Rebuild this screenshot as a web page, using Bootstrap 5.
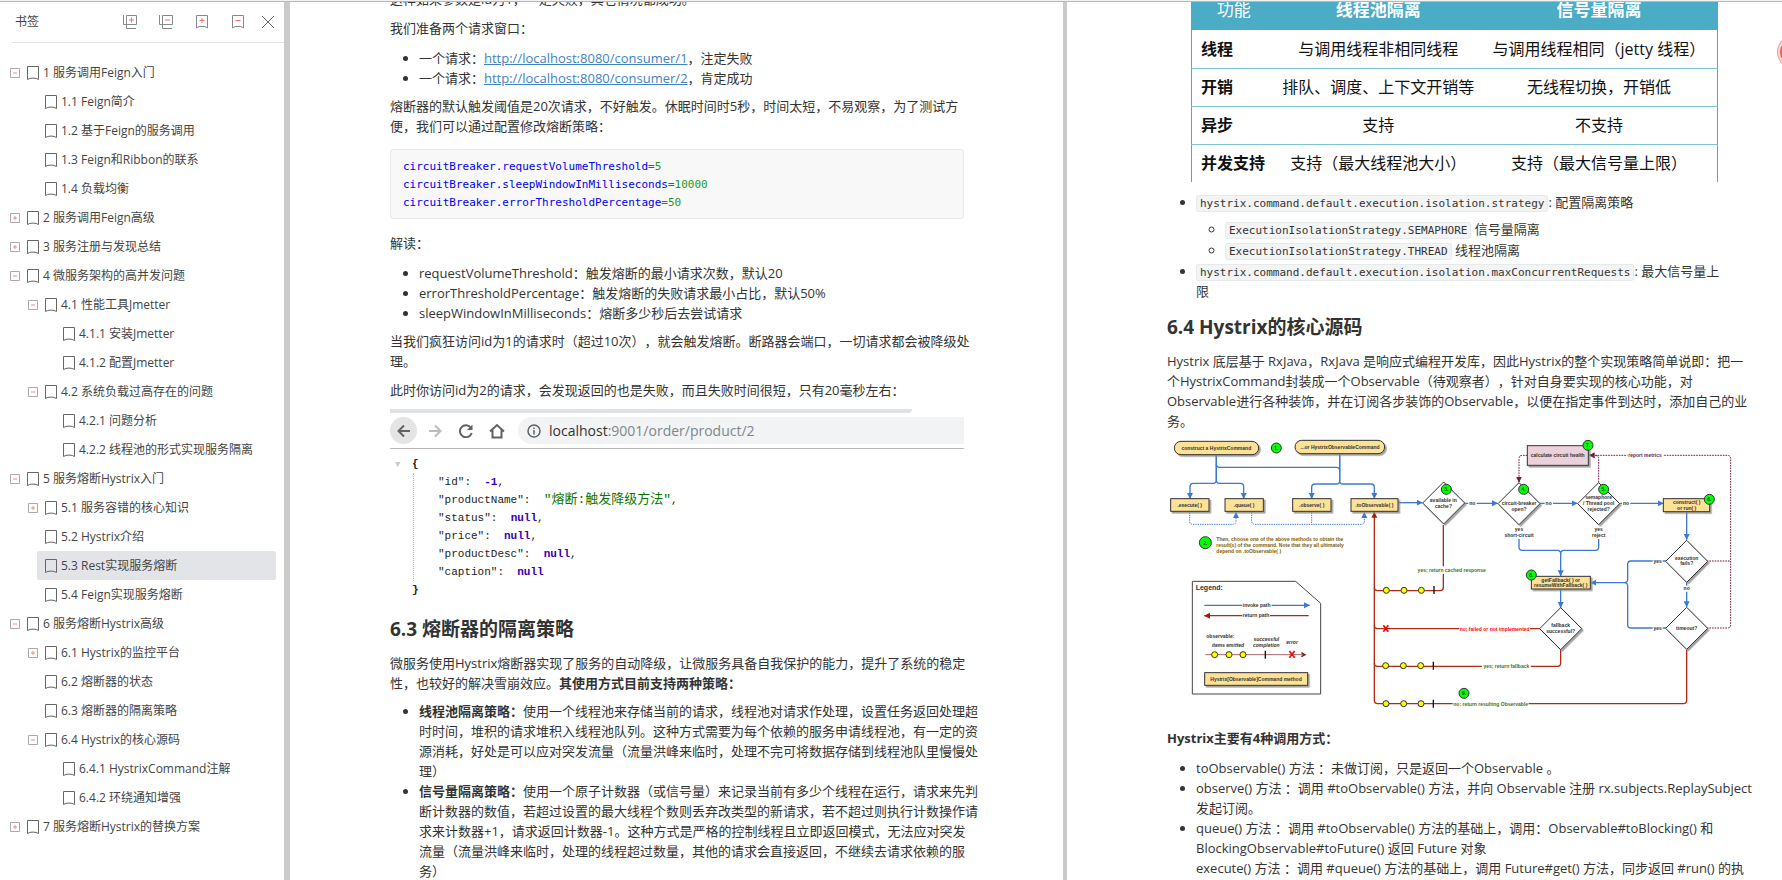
<!DOCTYPE html>
<html lang="zh-CN">
<head>
<meta charset="utf-8">
<meta name="viewport" content="width=device-width, initial-scale=1">
<title>服务熔断Hystrix</title>
<link href="https://cdn.jsdelivr.net/npm/bootstrap@5.3.0/dist/css/bootstrap.min.css" rel="stylesheet">
<style>
  body { font-family: "Open Sans", "Noto Sans CJK SC", sans-serif; font-size: 13px; line-height: 20px; color: #333; background: #fff; text-spacing-trim: space-all; }
  .viewer { border-top: 1px solid #f2f2f2; }
  .viewer-inner { border-top: 1px solid #b8b8b8; }

  /* bookmark panel */
  .outline-panel { width: 284px; font-size: 12px; color: #444; }
  .outline-head { height: 41px; margin-left: 12px; padding: 0 9px 0 3px; border-bottom: 1px solid #e4e4e4; }
  .outline-tools { gap: 22px; }
  .tool-btn { width: 14px; height: 14px; line-height: 0; }
  .outline-list { padding: 15px 8px 0 10px; }
  .outline-list li { display: flex; align-items: center; height: 29px; }
  .level-2 { padding-left: 18px; }
  .level-3 { padding-left: 36px; }
  .fold { width: 10px; height: 10px; margin-right: -1px; flex: none; line-height: 0; }
  .outline-link { height: 29px; padding-left: 8px; gap: 4px; border-radius: 2px; color: #444; text-decoration: none; white-space: nowrap; }
  .outline-link.active { background: #e3e4e8; }
  .outline-link svg { flex: none; }
  .gutter { width: 6px; background: #cacaca; }
  .gutter-thin { width: 4px; background: #cacaca; }

  /* document sheets */
  .sheet { min-width: 0; }
  .sheet-a { flex: 1 1 773px; padding: 0 84px 0 100px; }
  .sheet-b { flex: 1 1 715px; padding: 0 26px 0 100px; }
  .sheet p { margin: 0 0 9px; }
  .sheet ul { margin: 10px 0 8px; padding-left: 29px; }
  .sheet ul ul { margin: 7px 0 0; line-height: 21px; }
  .sheet h2 { margin: 12px 0 10px; font-size: 19px; line-height: 28px; font-weight: 700; color: #333; }
  .sheet a { color: #4183c4; }
  .scrolled-text { margin-top: -13px !important; }
  .scrolled-table { margin-top: -12px; }
  .inset { margin-right: 15px; }
  .sheet pre { margin: 13px 15px 14px 0; padding: 8px 12px 6px; border: 1px solid #e7eaed; border-radius: 3px; background: #f8f8f8; font: 11px/18px "DejaVu Sans Mono", monospace; color: #555; overflow: hidden; }
  .key { color: #0000f0; }
  .num { color: #1a9a1a; }
  .sheet li code { padding: 1px 3px; border: 1px solid #e7eaed; border-radius: 3px; background: #f3f4f4; font: 11px "DejaVu Sans Mono", monospace; color: #333; }

  /* browser capture */
  .tab-strip { width: 91%; height: 4px; background: #dee1e6; border-bottom-right-radius: 6px; }
  .nav-strip { height: 36px; border-bottom: 1px solid #b8b8b8; color: #5f6368; }
  .nav-ico { width: 27px; height: 27px; display: grid; place-items: center; border-radius: 50%; }
  .nav-ico.pressed { background: #e4e4e4; }
  .address { height: 27px; margin-left: 4px; padding-left: 9px; gap: 8px; background: #f1f3f4; border-radius: 14px 0 0 14px; font-size: 14px; color: #80868b; }
  .address b { font-weight: 400; color: #333; }
  .json-tree { padding: 6px 0 0 5px; font: 11px/18px "Liberation Mono", "Noto Sans CJK SC", monospace; color: #222; white-space: pre; }
  .json-tree > div, .json-body > div { height: 18px; }
  .json-tree > .json-body { height: auto; margin-left: 18px; padding-left: 24px; border-left: 1px dotted #bbb; }
  .json-body b { color: #3800b8; }
  .json-str { color: #0b7500; font-size: 13px; }
  .json-fold { display: inline-block; width: 17px; color: #ccc; font-size: 9px; }

  /* comparison table */
  .compare { width: 527px; max-width: 100%; margin-left: 24px; border: solid #4bacc6; border-width: 0 1px; table-layout: fixed; font-size: 16px; line-height: 24px; color: #111; text-align: center; }
  .compare thead { background: #4bacc6; color: #fff; font-size: 17px; }
  .compare thead th { height: 40px; }
  .compare th, .compare td { height: 38px; padding: 0; white-space: nowrap; }
  .compare tbody tr > :first-child { text-align: left; padding-left: 9px; }
  .compare thead th:first-child { font-weight: 400; }
  .compare tbody tr + tr { border-top: 1px solid #7cc3d6; }
  .flow { display: block; width: calc(100% - 15px); margin-bottom: 13px; }
  .flow text { font: 700 15px "Liberation Sans", sans-serif; text-anchor: middle; fill: #333; }
  .flow .legend-title { font-size: 21px; }
  .flow .slanted text { font-style: italic; }
  .flow .ok text { fill: #38761d; }
  .flow .note text { fill: #7f6000; text-anchor: start; }
  .flow .metric { fill: #741b47; }
  .flow .failed { fill: #f00; }
  .float-ball { position: absolute; top: 34px; right: -29px; width: 34px; height: 34px; border-radius: 50%; background: #e9605a; border: 3px solid #fbd5d2; outline: 1px solid #f0a09b; outline-offset: -1px; }
</style>
</head>
<body>
<svg width="0" height="0" class="position-absolute" aria-hidden="true">
  <symbol id="mark" viewBox="0 0 12 14"><path d="M.5 .5h11v13C9 11.600 3 11.600 .5 13.500z" fill="none" stroke="#666"/></symbol>
  <symbol id="minus" viewBox="0 0 10 10"><path d="M.5 .5h9v9h-9z" fill="none" stroke="#aaa"/><path d="M3 5h4" stroke="#f08a8a"/></symbol>
  <symbol id="plus" viewBox="0 0 10 10"><path d="M.5 .5h9v9h-9z" fill="none" stroke="#aaa"/><path d="M3 5h4M5 3v4" stroke="#f08a8a"/></symbol>
</svg>

<div class="viewer vh-100 overflow-hidden position-relative">
<div class="viewer-inner d-flex h-100">

<aside class="outline-panel flex-shrink-0">
  <div class="outline-head d-flex align-items-center">
    <span class="me-auto">书签</span>
    <div class="outline-tools d-flex">
      <button class="tool-btn btn p-0 border-0" aria-label="展开全部"><svg width="14" height="14" fill="none" stroke="#888"><path d="M.5 0v9.500h3M3.500 .5h10v9h-10zM3.500 9.500v4h9.500"/><path d="M6 5h5M8.500 2.500v5" stroke="#f07070"/></svg></button>
      <button class="tool-btn btn p-0 border-0" aria-label="折叠全部"><svg width="14" height="14" fill="none" stroke="#888"><path d="M.5 0v9.500h3M3.500 .5h10v9h-10zM3.500 9.500v4h9.500"/><path d="M6 5h5" stroke="#f07070"/></svg></button>
      <button class="tool-btn btn p-0 border-0" aria-label="添加书签"><svg width="14" height="14" fill="none" stroke="#888"><path d="M1.500 .5h11v12.500L10 11.500H4l-2.500 1.500z"/><path d="M4.500 5.500h5M7 3v5" stroke="#f07070"/></svg></button>
      <button class="tool-btn btn p-0 border-0" aria-label="删除书签"><svg width="14" height="14" fill="none" stroke="#888"><path d="M1.500 .5h11v12.500L10 11.500H4l-2.500 1.500z"/><path d="M4.500 5.500h5" stroke="#f07070"/></svg></button>
    </div>
    <button class="tool-btn btn p-0 border-0 ms-3" aria-label="关闭"><svg width="14" height="14" stroke="#666"><path d="M1 1l12 12M13 1L1 13"/></svg></button>
  </div>
  <ul class="outline-list list-unstyled mb-0">
    <li><button class="fold btn p-0 border-0" aria-label="折叠"><svg width="10" height="10"><use href="#minus"/></svg></button><a href="#" class="outline-link d-flex align-items-center flex-fill"><svg width="12" height="14"><use href="#mark"/></svg>1 服务调用Feign入门</a></li>
    <li class="level-2"><span class="fold"></span><a href="#" class="outline-link d-flex align-items-center flex-fill"><svg width="12" height="14"><use href="#mark"/></svg>1.1 Feign简介</a></li>
    <li class="level-2"><span class="fold"></span><a href="#" class="outline-link d-flex align-items-center flex-fill"><svg width="12" height="14"><use href="#mark"/></svg>1.2 基于Feign的服务调用</a></li>
    <li class="level-2"><span class="fold"></span><a href="#" class="outline-link d-flex align-items-center flex-fill"><svg width="12" height="14"><use href="#mark"/></svg>1.3 Feign和Ribbon的联系</a></li>
    <li class="level-2"><span class="fold"></span><a href="#" class="outline-link d-flex align-items-center flex-fill"><svg width="12" height="14"><use href="#mark"/></svg>1.4 负载均衡</a></li>
    <li><button class="fold btn p-0 border-0" aria-label="展开"><svg width="10" height="10"><use href="#plus"/></svg></button><a href="#" class="outline-link d-flex align-items-center flex-fill"><svg width="12" height="14"><use href="#mark"/></svg>2 服务调用Feign高级</a></li>
    <li><button class="fold btn p-0 border-0" aria-label="展开"><svg width="10" height="10"><use href="#plus"/></svg></button><a href="#" class="outline-link d-flex align-items-center flex-fill"><svg width="12" height="14"><use href="#mark"/></svg>3 服务注册与发现总结</a></li>
    <li><button class="fold btn p-0 border-0" aria-label="折叠"><svg width="10" height="10"><use href="#minus"/></svg></button><a href="#" class="outline-link d-flex align-items-center flex-fill"><svg width="12" height="14"><use href="#mark"/></svg>4 微服务架构的高并发问题</a></li>
    <li class="level-2"><button class="fold btn p-0 border-0" aria-label="折叠"><svg width="10" height="10"><use href="#minus"/></svg></button><a href="#" class="outline-link d-flex align-items-center flex-fill"><svg width="12" height="14"><use href="#mark"/></svg>4.1 性能工具Jmetter</a></li>
    <li class="level-3"><span class="fold"></span><a href="#" class="outline-link d-flex align-items-center flex-fill"><svg width="12" height="14"><use href="#mark"/></svg>4.1.1 安装Jmetter</a></li>
    <li class="level-3"><span class="fold"></span><a href="#" class="outline-link d-flex align-items-center flex-fill"><svg width="12" height="14"><use href="#mark"/></svg>4.1.2 配置Jmetter</a></li>
    <li class="level-2"><button class="fold btn p-0 border-0" aria-label="折叠"><svg width="10" height="10"><use href="#minus"/></svg></button><a href="#" class="outline-link d-flex align-items-center flex-fill"><svg width="12" height="14"><use href="#mark"/></svg>4.2 系统负载过高存在的问题</a></li>
    <li class="level-3"><span class="fold"></span><a href="#" class="outline-link d-flex align-items-center flex-fill"><svg width="12" height="14"><use href="#mark"/></svg>4.2.1 问题分析</a></li>
    <li class="level-3"><span class="fold"></span><a href="#" class="outline-link d-flex align-items-center flex-fill"><svg width="12" height="14"><use href="#mark"/></svg>4.2.2 线程池的形式实现服务隔离</a></li>
    <li><button class="fold btn p-0 border-0" aria-label="折叠"><svg width="10" height="10"><use href="#minus"/></svg></button><a href="#" class="outline-link d-flex align-items-center flex-fill"><svg width="12" height="14"><use href="#mark"/></svg>5 服务熔断Hystrix入门</a></li>
    <li class="level-2"><button class="fold btn p-0 border-0" aria-label="展开"><svg width="10" height="10"><use href="#plus"/></svg></button><a href="#" class="outline-link d-flex align-items-center flex-fill"><svg width="12" height="14"><use href="#mark"/></svg>5.1 服务容错的核心知识</a></li>
    <li class="level-2"><span class="fold"></span><a href="#" class="outline-link d-flex align-items-center flex-fill"><svg width="12" height="14"><use href="#mark"/></svg>5.2 Hystrix介绍</a></li>
    <li class="level-2"><span class="fold"></span><a href="#" class="outline-link active d-flex align-items-center flex-fill"><svg width="12" height="14"><use href="#mark"/></svg>5.3 Rest实现服务熔断</a></li>
    <li class="level-2"><span class="fold"></span><a href="#" class="outline-link d-flex align-items-center flex-fill"><svg width="12" height="14"><use href="#mark"/></svg>5.4 Feign实现服务熔断</a></li>
    <li><button class="fold btn p-0 border-0" aria-label="折叠"><svg width="10" height="10"><use href="#minus"/></svg></button><a href="#" class="outline-link d-flex align-items-center flex-fill"><svg width="12" height="14"><use href="#mark"/></svg>6 服务熔断Hystrix高级</a></li>
    <li class="level-2"><button class="fold btn p-0 border-0" aria-label="展开"><svg width="10" height="10"><use href="#plus"/></svg></button><a href="#" class="outline-link d-flex align-items-center flex-fill"><svg width="12" height="14"><use href="#mark"/></svg>6.1 Hystrix的监控平台</a></li>
    <li class="level-2"><span class="fold"></span><a href="#" class="outline-link d-flex align-items-center flex-fill"><svg width="12" height="14"><use href="#mark"/></svg>6.2 熔断器的状态</a></li>
    <li class="level-2"><span class="fold"></span><a href="#" class="outline-link d-flex align-items-center flex-fill"><svg width="12" height="14"><use href="#mark"/></svg>6.3 熔断器的隔离策略</a></li>
    <li class="level-2"><button class="fold btn p-0 border-0" aria-label="折叠"><svg width="10" height="10"><use href="#minus"/></svg></button><a href="#" class="outline-link d-flex align-items-center flex-fill"><svg width="12" height="14"><use href="#mark"/></svg>6.4 Hystrix的核心源码</a></li>
    <li class="level-3"><span class="fold"></span><a href="#" class="outline-link d-flex align-items-center flex-fill"><svg width="12" height="14"><use href="#mark"/></svg>6.4.1 HystrixCommand注解</a></li>
    <li class="level-3"><span class="fold"></span><a href="#" class="outline-link d-flex align-items-center flex-fill"><svg width="12" height="14"><use href="#mark"/></svg>6.4.2 环绕通知增强</a></li>
    <li><button class="fold btn p-0 border-0" aria-label="展开"><svg width="10" height="10"><use href="#plus"/></svg></button><a href="#" class="outline-link d-flex align-items-center flex-fill"><svg width="12" height="14"><use href="#mark"/></svg>7 服务熔断Hystrix的替换方案</a></li>
  </ul>
</aside>

<div class="gutter flex-shrink-0"></div>

<article class="sheet sheet-a overflow-hidden">
  <p class="scrolled-text">这样如果参数是id为1，一定失败，其它情况都成功。</p>
  <p>我们准备两个请求窗口：</p>
  <ul>
    <li>一个请求：<a href="#">http://localhost:8080/consumer/1</a>，注定失败</li>
    <li>一个请求：<a href="#">http://localhost:8080/consumer/2</a>，肯定成功</li>
  </ul>
  <p>熔断器的默认触发阈值是20次请求，不好触发。休眠时间时5秒，时间太短，不易观察，为了测试方<br>便，我们可以通过配置修改熔断策略：</p>
  <pre><span class="key">circuitBreaker.requestVolumeThreshold</span>=<span class="num">5</span>
<span class="key">circuitBreaker.sleepWindowInMilliseconds</span>=<span class="num">10000</span>
<span class="key">circuitBreaker.errorThresholdPercentage</span>=<span class="num">50</span></pre>
  <p>解读：</p>
  <ul>
    <li>requestVolumeThreshold：触发熔断的最小请求次数，默认20</li>
    <li>errorThresholdPercentage：触发熔断的失败请求最小占比，默认50%</li>
    <li>sleepWindowInMilliseconds：熔断多少秒后去尝试请求</li>
  </ul>
  <p>当我们疯狂访问id为1的请求时（超过10次），就会触发熔断。断路器会端口，一切请求都会被降级处<br>理。</p>
  <p>此时你访问id为2的请求，会发现返回的也是失败，而且失败时间很短，只有20毫秒左右：</p>

  <figure class="inset mb-0">
    <div class="tab-strip"></div>
    <div class="nav-strip d-flex align-items-center gap-1">
      <span class="nav-ico pressed"><svg width="14" height="14" fill="none" stroke="#5f6368" stroke-width="2"><path d="M13 7H2M7 1.500L1.500 7 7 12.500"/></svg></span>
      <span class="nav-ico"><svg width="14" height="14" fill="none" stroke="#bbb" stroke-width="2"><path d="M1 7h11M7 1.500L12.500 7 7 12.500"/></svg></span>
      <span class="nav-ico"><svg width="14" height="14" fill="none" stroke="#5f6368" stroke-width="2"><path d="M12 4A6 6 0 1 0 12.700 9"/><path d="M13.500 .5v5.500H8z" fill="#5f6368" stroke="none"/></svg></span>
      <span class="nav-ico"><svg width="16" height="16" fill="none" stroke="#5f6368" stroke-width="2"><path d="M1 8.500L8 2l7 6.500M3.500 7v7.500h9V7"/></svg></span>
      <div class="address d-flex align-items-center flex-fill">
        <svg width="14" height="14" fill="none" stroke="#5f6368" stroke-width="1.500"><circle cx="7" cy="7" r="6"/><path d="M7 6v4.500M7 3.500v1.500"/></svg>
        <span><b>localhost</b>:9001/order/product/2</span>
      </div>
    </div>
    <div class="json-tree"><div><span class="json-fold">▼</span><b>{</b></div><div class="json-body"><div>"id":  <b>-1</b>,</div><div>"productName":  <span class="json-str">"熔断:触发降级方法"</span>,</div><div>"status":  <b>null</b>,</div><div>"price":  <b>null</b>,</div><div>"productDesc":  <b>null</b>,</div><div>"caption":  <b>null</b></div></div><div><span class="json-fold"></span><b>}</b></div></div>
  </figure>

  <h2 class="mt-3">6.3 熔断器的隔离策略</h2>
  <p class="mb-2">微服务使用Hystrix熔断器实现了服务的自动降级，让微服务具备自我保护的能力，提升了系统的稳定<br>性，也较好的解决雪崩效应。<strong>其使用方式目前支持两种策略：</strong></p>
  <ul class="mt-2">
    <li><strong>线程池隔离策略：</strong>使用一个线程池来存储当前的请求，线程池对请求作处理，设置任务返回处理超时时间，堆积的请求堆积入线程池队列。这种方式需要为每个依赖的服务申请线程池，有一定的资源消耗，好处是可以应对突发流量（流量洪峰来临时，处理不完可将数据存储到线程池队里慢慢处理）</li>
    <li><strong>信号量隔离策略：</strong>使用一个原子计数器（或信号量）来记录当前有多少个线程在运行，请求来先判断计数器的数值，若超过设置的最大线程个数则丢弃改类型的新请求，若不超过则执行计数操作请求来计数器+1，请求返回计数器-1。这种方式是严格的控制线程且立即返回模式，无法应对突发<br>流量（流量洪峰来临时，处理的线程超过数量，其他的请求会直接返回，不继续去请求依赖的服<br>务）</li>
  </ul>
</article>

<div class="gutter-thin flex-shrink-0"></div>

<article class="sheet sheet-b overflow-hidden">
  <table class="compare scrolled-table">
    <colgroup><col style="width:16%"><col style="width:39%"><col style="width:45%"></colgroup>
    <thead><tr><th scope="col">功能</th><th scope="col">线程池隔离</th><th scope="col">信号量隔离</th></tr></thead>
    <tbody>
      <tr><th scope="row">线程</th><td>与调用线程非相同线程</td><td>与调用线程相同（jetty 线程）</td></tr>
      <tr><th scope="row">开销</th><td>排队、调度、上下文开销等</td><td>无线程切换，开销低</td></tr>
      <tr><th scope="row">异步</th><td>支持</td><td>不支持</td></tr>
      <tr><th scope="row">并发支持</th><td>支持（最大线程池大小）</td><td>支持（最大信号量上限）</td></tr>
    </tbody>
  </table>
  <ul>
    <li><code>hystrix.command.default.execution.isolation.strategy</code>: 配置隔离策略
      <ul>
        <li><code>ExecutionIsolationStrategy.SEMAPHORE</code> 信号量隔离</li>
        <li><code>ExecutionIsolationStrategy.THREAD</code> 线程池隔离</li>
      </ul>
    </li>
    <li><code>hystrix.command.default.execution.isolation.maxConcurrentRequests</code>: 最大信号量上<br>限</li>
  </ul>
  <h2>6.4 Hystrix的核心源码</h2>
  <p class="mb-1">Hystrix 底层基于 RxJava，RxJava 是响应式编程开发库，因此Hystrix的整个实现策略简单说即：把一<br>个HystrixCommand封装成一个Observable（待观察者），针对自身要实现的核心功能，对<br>Observable进行各种装饰，并在订阅各步装饰的Observable，以便在指定事件到达时，添加自己的业<br>务。</p>

  <svg class="flow" viewBox="51 18 1722 840" role="img" aria-label="Hystrix 执行流程图">
    <defs>
      <marker id="ab" markerUnits="userSpaceOnUse" markerWidth="20" markerHeight="20" refX="17" refY="9" orient="auto"><path d="M0 0L18 9L0 18z" fill="#3c78d8"/></marker>
      <marker id="ar" markerUnits="userSpaceOnUse" markerWidth="20" markerHeight="20" refX="17" refY="9" orient="auto"><path d="M0 0L18 9L0 18z" fill="#a61c00"/></marker>
      <marker id="ap" markerUnits="userSpaceOnUse" markerWidth="20" markerHeight="20" refX="17" refY="9" orient="auto"><path d="M0 0L18 9L0 18z" fill="#741b47"/></marker>
      <filter id="sh" x="-10%" y="-20%" width="130%" height="160%"><feDropShadow dx="5" dy="5" stdDeviation="1" flood-color="#888" flood-opacity=".8"/></filter>
    </defs>
    <!-- invoke paths -->
    <g fill="none" stroke="#3c78d8" stroke-width="4">
      <path d="M199 78v75q0 10-10 10h-59q-10 0-10 10v36" marker-end="url(#ab)"/>
      <path d="M199 78v75q0 10 10 10h62q10 0 10 10v36" marker-end="url(#ab)"/>
      <path d="M199 105q0 10 10 10h350q10 0 10 10"/>
      <path d="M569 75v80q0 10-10 10h-64q-10 0-10 10v34" marker-end="url(#ab)"/>
      <path d="M569 75v80q0 10 10 10h84q10 0 10 10v34" marker-end="url(#ab)"/>
      <path d="M744 221h73" marker-end="url(#ab)"/>
      <path d="M944 223h99" marker-end="url(#ab)"/>
      <path d="M1170 223h112" marker-end="url(#ab)"/>
      <path d="M1410 223h130" marker-end="url(#ab)"/>
      <path d="M1610 249v83" marker-end="url(#ab)"/>
      <path d="M1610 460v74" marker-end="url(#ab)"/>
      <path d="M1107 330v24q0 10 10 10h105q10 0 10 10v67" marker-end="url(#ab)"/>
      <path d="M1346 330v24q0 10-10 10h-94q-10 0-10 10"/>
      <path d="M1232 481v55" marker-end="url(#ab)"/>
      <path d="M1548 396h-105q-10 0-10 10v45q0 10-10 10h-101" marker-end="url(#ab)"/>
      <path d="M1548 597h-105q-10 0-10-10v-116q0-10-10-10"/>
      <path d="M163 529h316" marker-end="url(#ab)"/>
      <g stroke-width="3" stroke-dasharray="4 3">
        <path d="M119 250v26q0 10 10 10h119q10 0 10-10v-26" marker-end="url(#ab)"/>
        <path d="M305 250v26q0 10 10 10h318q10 0 10-10v-26" marker-end="url(#ab)"/>
        <path d="M485 250v36"/>
      </g>
    </g>
    <!-- return paths -->
    <g fill="none" stroke="#b02a14" stroke-width="4">
      <path d="M1610 662v152q0 10-10 10H683q-10 0-10-10V249" marker-end="url(#ar)"/>
      <path d="M880 288v187q0 10-10 10H683q-10 0-10-10"/>
      <path d="M1170 599H683q-10 0-10-10"/>
      <path d="M1232 662v40q0 10-10 10H683q-10 0-10-10"/>
      <path d="M476 560H163" marker-end="url(#ar)"/>
      <path d="M166 677h299" stroke="#741b1b" stroke-width="2"/><path d="M454 671l11 6-11 6" stroke="#741b1b"/>
    </g>
    <!-- metric paths -->
    <g fill="none" stroke="#741b47" stroke-width="3" stroke-dasharray="5 3">
      <path d="M1132 79h-15q-10 0-10 10v71" marker-end="url(#ap)"/>
      <path d="M1670 597h62q10 0 10-10V89q0-10-10-10h-415" marker-end="url(#ap)"/>
      <path d="M1670 396h72M1346 160V89q0-10-10-10"/>
    </g>
    <!-- nodes -->
    <g fill="#fce196" stroke="#333" stroke-width="3" filter="url(#sh)">
      <rect x="73" y="37" width="253" height="40" rx="20"/><rect x="435" y="34" width="269" height="40" rx="20"/>
      <rect x="62" y="209" width="115" height="38"/><rect x="225" y="209" width="115" height="38"/><rect x="428" y="209" width="115" height="38"/><rect x="603" y="209" width="141" height="38"/>
      <rect x="1540" y="209" width="139" height="39"/><rect x="1144" y="442" width="177" height="38"/><rect x="164" y="731" width="309" height="38"/>
      <rect x="1132" y="50" width="183" height="59" fill="#ead1dc"/>
      <g fill="#fff"><path d="M881 159l63 63-63 63-63-63zM1107 161l63 63-63 63-63-63zM1346 161l63 63-63 63-63-63zM1610 334l63 63-63 63-63-63zM1610 535l63 63-63 63-63-63zM1232 536l63 63-63 63-63-63z"/></g>
    </g>
    <path d="M127 457h310l75 66v272H127z" fill="none" stroke="#444" stroke-width="3"/>
    <!-- label backings over the lines -->
    <g fill="#fff">
      <path d="M955 213h25v20h-25zM1184 213h25v20h-25zM1416 213h25v20h-25zM1600 470h20v18h-20zM1508 387h30v18h-30zM1508 588h30v18h-30zM277 519h88v20h-88zM277 550h83v20h-83zM1432 70h108v18h-108zM800 412h210v22H800zM928 589h212v20H928zM996 702h146v20H996zM908 815h228v20H908z"/>
    </g>
    <!-- emitted items -->
    <g fill="#ff0" stroke="#333" stroke-width="3">
      <circle cx="709" cy="484" r="9"/><circle cx="762" cy="484" r="9"/><circle cx="814" cy="484" r="9"/>
      <circle cx="707" cy="710" r="9"/><circle cx="760" cy="710" r="9"/><circle cx="812" cy="710" r="9"/>
      <circle cx="708" cy="824" r="9"/><circle cx="761" cy="824" r="9"/><circle cx="813" cy="824" r="9"/>
      <circle cx="194" cy="677" r="9"/><circle cx="237" cy="677" r="9"/><circle cx="279" cy="677" r="9"/>
      <path d="M852 471v24M850 698v24M850 812v24M346 665v24" stroke-width="4" stroke="#111"/>
      <path d="M700 589l15 19M715 589l-15 19M418 666l16 20M434 666l-16 20" stroke="#f00" stroke-width="5"/>
    </g>
    <!-- step badges -->
    <g fill="#0f0" stroke="#333" stroke-width="3">
      <circle cx="379" cy="57" r="15"/><circle cx="166" cy="341" r="18"/><circle cx="889" cy="181" r="15"/><circle cx="1121" cy="181" r="15"/><circle cx="1361" cy="181" r="15"/><circle cx="1678" cy="211" r="15"/><circle cx="1314" cy="49" r="15"/><circle cx="1144" cy="438" r="15"/><circle cx="942" cy="793" r="15"/>
    </g>
    <g>
      <text x="379" y="62">1.</text><text x="166" y="347">2.</text><text x="889" y="187">3.</text><text x="1121" y="187">4.</text><text x="1361" y="187">5.</text><text x="1678" y="217">6.</text><text x="1314" y="55">7.</text><text x="1144" y="444">8.</text><text x="942" y="799">9.</text>
      <text x="199" y="63">construct a HystrixCommand</text><text x="570" y="59">...or HystrixObservableCommand</text>
      <text x="119" y="234">.execute( )</text><text x="282" y="234">.queue( )</text><text x="485" y="234">.observe( )</text><text x="673" y="234">.toObservable( )</text>
      <text x="880" y="220">available in</text><text x="880" y="237">cache?</text>
      <text x="1107" y="229">circuit-breaker</text><text x="1107" y="246">open?</text>
      <text x="1346" y="211">semaphore</text><text x="1346" y="229">/ Thread pool</text><text x="1346" y="246">rejected?</text>
      <text x="1610" y="225">construct( )</text><text x="1610" y="243">or run( )</text>
      <text x="1610" y="392">execution</text><text x="1610" y="409">fails?</text><text x="1610" y="603">timeout?</text>
      <text x="1232" y="458">getFallback( ) or</text><text x="1232" y="475">resumeWithFallback( )</text>
      <text x="1232" y="595">fallback</text><text x="1232" y="612">successful?</text>
      <text x="1223" y="85">calculate circuit health</text>
      <text x="967" y="229">no</text><text x="1196" y="229">no</text><text x="1428" y="229">no</text><text x="1610" y="484">no</text><text x="1523" y="401">yes</text><text x="1523" y="603">yes</text>
      <text x="1107" y="306">yes</text><text x="1107" y="323">short-circuit</text><text x="1346" y="306">yes</text><text x="1346" y="323">reject</text>
      <text x="320" y="535">invoke path</text><text x="318" y="565">return path</text><text x="318" y="756">Hystrix[Observable]Command method</text>
      <text x="211" y="627">observable:</text>
      <text class="legend-title" x="178" y="482">Legend:</text>
      <g class="slanted"><text x="234" y="655">items emitted</text><text x="349" y="637">successful</text><text x="349" y="655">completion</text><text x="426" y="646">error</text></g>
      <text class="metric" x="1485" y="85">report metrics</text>
      <text class="failed" x="1034" y="605">no; failed or not implemented</text>
      <g class="ok"><text x="905" y="429">yes; return cached response</text><text x="1069" y="718">yes; return fallback</text><text x="1022" y="831">no; return resulting Observable</text></g>
      <g class="note"><text x="199" y="337">Then, choose one of the above methods to obtain the</text><text x="199" y="354">result(s) of the command. Note that they all ultimately</text><text x="199" y="371">depend on .toObservable( )</text></g>
    </g>
  </svg>

  <p><strong>Hystrix主要有4种调用方式：</strong></p>
  <ul>
    <li>toObservable() 方法 ：未做订阅，只是返回一个Observable 。</li>
    <li>observe() 方法 ：调用 #toObservable() 方法，并向 Observable 注册 rx.subjects.ReplaySubject<br>发起订阅。</li>
    <li>queue() 方法 ：调用 #toObservable() 方法的基础上，调用：Observable#toBlocking() 和<br>BlockingObservable#toFuture() 返回 Future 对象<br>execute() 方法 ：调用 #queue() 方法的基础上，调用 Future#get() 方法，同步返回 #run() 的执<br>行结果。</li>
  </ul>
</article>

</div>
<button class="float-ball p-0" aria-label="工具"></button>
</div>
<script src="https://cdn.jsdelivr.net/npm/bootstrap@5.3.0/dist/js/bootstrap.bundle.min.js"></script>
</body>
</html>
